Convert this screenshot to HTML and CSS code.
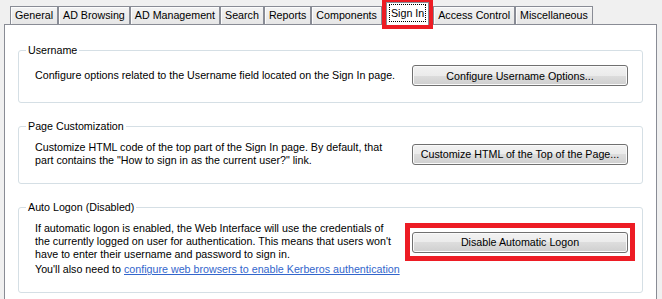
FILE: index.html
```html
<!DOCTYPE html>
<html lang="en">
<head>
    <meta charset="UTF-8">
    <title>Sign In Settings</title>
    <link rel="stylesheet" href="styles.css">
</head>
<body>

    <!-- Tab strip -->
    <div class="tabs">
        <div class="tab">General</div>
        <div class="tab">AD Browsing</div>
        <div class="tab">AD Management</div>
        <div class="tab">Search</div>
        <div class="tab">Reports</div>
        <div class="tab">Components</div>
        <div class="tab tab-active marked"><span class="focus">Sign In</span></div>
        <div class="tab">Access Control</div>
        <div class="tab">Miscellaneous</div>
    </div>

    <!-- Tab page -->
    <div class="panel">
        <fieldset class="group">
            <legend>Username</legend>
            <div class="group-row">
                <p class="group-text">Configure options related to the Username field located on the Sign In page.</p>
                <button class="btn">Configure Username Options...</button>
            </div>
        </fieldset>

        <fieldset class="group">
            <legend>Page Customization</legend>
            <div class="group-row">
                <p class="group-text">Customize HTML code of the top part of the Sign In page. By default, that<br>part contains the "How to sign in as the current user?" link.</p>
                <button class="btn">Customize HTML of the Top of the Page...</button>
            </div>
        </fieldset>

        <fieldset class="group">
            <legend>Auto Logon (Disabled)</legend>
            <div class="group-row">
                <p class="group-text">If automatic logon is enabled, the Web Interface will use the credentials of<br>the currently logged on user for authentication. This means that users won't<br>have to enter their username and password to sign in.</p>
                <span class="mark-box">
                    <button class="btn">Disable Automatic Logon</button>
                </span>
            </div>
            <p class="group-note">You'll also need to <a href="#">configure web browsers to enable Kerberos authentication</a></p>
        </fieldset>
    </div>

</body>
</html>
```

FILE: styles.css
```css
/* General Styling */
html, body {
    overflow: hidden;
}

body {
    margin: 0;
    background-color: #f0f0f0;
    font-family: "Liberation Sans", Arial, sans-serif;
    font-size: 10.7px;
    color: #000;
}

/* Tab strip */
.tabs {
    display: flex;
    align-items: flex-end;
    height: 18px;
    padding: 6px 0 0 10px;
}

.tab {
    box-sizing: border-box;
    height: 18px;
    padding: 0 4px;
    line-height: 17px;
    white-space: nowrap;
    border: 1px solid #898c95;
    border-bottom: none;
    background: linear-gradient(#f3f3f3, #e6e6e6);
    box-shadow: inset 1px 1px 0 #fcfcfc;
}

.tab-active {
    position: relative;
    z-index: 1;
    height: 23px;
    margin: 0 4px -1px 4px;
    padding: 2px 3px 0 3px;
    background: #fff;
    box-shadow: none;
}

.focus {
    display: inline-block;
    line-height: 16px;
    padding: 0 1px;
    outline: 1px dotted #000;
}

/* red annotation boxes */
.marked {
    outline: 4px solid #ed1c24;
}

.mark-box {
    display: flex;
    flex: none;
    margin-right: -7px;
    padding: 4px 2px 3px 2px;
    border: 5px solid #ed1c24;
}

/* Tab page */
.panel {
    margin: 0 5px 0 4px;
    padding: 19px 13px 30px 13px;
    background-color: #fff;
    border: 1px solid #898c95;
}

.group {
    margin: 0 0 17px 0;
    padding: 8px 14px 16px 16px;
    border: 1px solid #d5dfe5;
    border-radius: 3px;
}

.group:last-child {
    margin-bottom: 0;
}

.group legend {
    margin-left: -9px;
    padding: 0 2px;
    line-height: 13px;
}

.group-row {
    display: flex;
    align-items: center;
    justify-content: space-between;
}

.group-text {
    margin: 0;
    line-height: 13px;
    white-space: nowrap;
}

.group-note {
    margin: 2px 0 0 0;
    line-height: 13px;
}

.group-note a {
    color: #3366cc;
}

/* Buttons */
.btn {
    flex: none;
    box-sizing: border-box;
    width: 216px;
    height: 21px;
    padding: 0;
    font: inherit;
    color: #000;
    border: 1px solid #707070;
    border-radius: 3px;
    background: linear-gradient(#f2f2f2 0%, #ebebeb 50%, #dddddd 50%, #cfcfcf 100%);
    box-shadow: inset 0 0 0 1px #fafafa;
}
```
